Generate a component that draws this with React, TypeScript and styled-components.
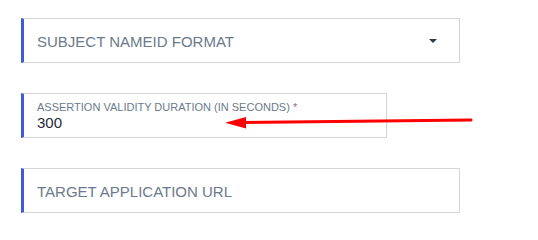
import React, { FC } from 'react';
import styled, { createGlobalStyle } from 'styled-components';

const GlobalStyle = createGlobalStyle`
  html, body {
    margin: 0;
    padding: 0;
    background: #ffffff;
    font-family: "Liberation Sans", Arial, sans-serif;
  }
`;

const Page = styled.div`
  position: relative;
  width: 538px;
  height: 238px;
  padding: 18px 0 0 21px;
  box-sizing: border-box;
  display: flex;
  flex-direction: column;
  gap: 30px;
`;

const Field = styled.div<{ $width: number }>`
  position: relative;
  width: ${(p) => p.$width}px;
  height: 45px;
  box-sizing: border-box;
  border: 1px solid #d3d5da;
  border-left: 3px solid #3f5bd8;
  display: flex;
  align-items: center;
  padding: 0 22px 0 13px;
`;

const Placeholder = styled.span`
  flex: 1;
  font-size: 15px;
  color: #6b7a8c;
  padding-top: 1px;
`;

const Caret = styled.span`
  width: 0;
  height: 0;
  border-left: 4px solid transparent;
  border-right: 4px solid transparent;
  border-top: 4px solid #2f3a4a;
`;

const Stack = styled.div`
  display: flex;
  flex-direction: column;
  gap: 0;
`;

const Label = styled.span`
  font-size: 11px;
  line-height: 14px;
  color: #6b7a8c;
  span {
    color: #94667a;
  }
`;

const Value = styled.span`
  font-size: 15px;
  line-height: 17px;
  color: #262b33;
`;

const Arrow = styled.svg`
  position: absolute;
  left: 222px;
  top: 112px;
`;

const App: FC = () => {
  return (
    <>
      <GlobalStyle />
      <Page>
        <Field $width={439}>
          <Placeholder>SUBJECT NAMEID FORMAT</Placeholder>
          <Caret />
        </Field>
        <Field $width={366}>
          <Stack>
            <Label>
              ASSERTION VALIDITY DURATION (IN SECONDS) <span>*</span>
            </Label>
            <Value>300</Value>
          </Stack>
        </Field>
        <Field $width={439}>
          <Placeholder>TARGET APPLICATION URL</Placeholder>
        </Field>
        <Arrow width="256" height="20" viewBox="0 0 256 20">
          <line x1="20" y1="10.5" x2="249" y2="8" stroke="#ff0000" strokeWidth="3" strokeLinecap="round" />
          <polygon points="3,10.8 24,5 24,16.5" fill="#ff0000" />
        </Arrow>
      </Page>
    </>
  );
};

export default App;
